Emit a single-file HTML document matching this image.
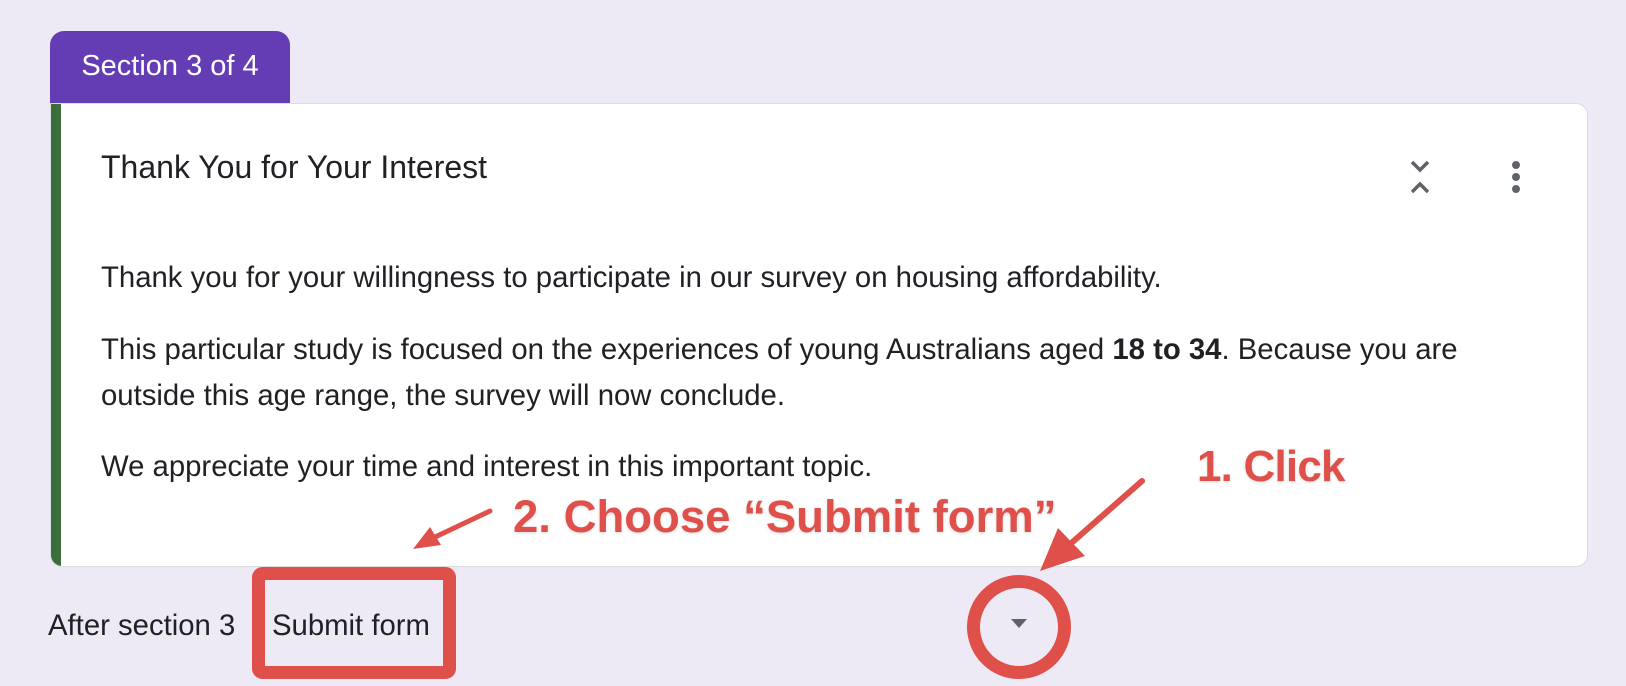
<!DOCTYPE html>
<html><head><meta charset="utf-8"><style>
html,body{margin:0;padding:0;}
body{width:1626px;height:686px;background:#edeaf5;position:relative;overflow:hidden;font-family:"Liberation Sans",Arial,sans-serif;color:#202124;}
.tab{position:absolute;left:50px;top:31px;width:240px;height:72px;background:#643db5;border-radius:14px 14px 0 0;color:#fff;font-size:29px;line-height:70px;text-align:center;}
.card{position:absolute;left:50px;top:103px;width:1538px;height:464px;background:#fff;border:1px solid #dadce0;border-radius:0 12px 12px 12px;box-sizing:border-box;overflow:hidden;}
.card .bar{position:absolute;left:0;top:0;bottom:0;width:10px;background:#3b6e3b;}
.t{position:absolute;left:50px;white-space:nowrap;font-size:29.3px;}
.red{color:#e0504a;font-weight:bold;position:absolute;white-space:nowrap;font-size:45.5px;text-shadow:0 1px 3px rgba(0,0,0,0.15);}
</style></head><body>
<div class="tab">Section 3 of 4</div>
<div class="card"><div class="bar"></div>
<div class="t" style="top:45px;font-size:32px;">Thank You for Your Interest</div>
<div class="t" style="top:157px;">Thank you for your willingness to participate in our survey on housing affordability.</div>
<div class="t" style="top:229px;">This particular study is focused on the experiences of young Australians aged <b>18 to 34</b>. Because you are</div>
<div class="t" style="top:275px;">outside this age range, the survey will now conclude.</div>
<div class="t" style="top:346px;">We appreciate your time and interest in this important topic.</div>
</div>
<svg style="position:absolute;left:0;top:0" width="1626" height="686">
<polyline points="1412,162 1420,170 1428,162" fill="none" stroke="#5f6368" stroke-width="3.5"/>
<polyline points="1412,192 1420,184 1428,192" fill="none" stroke="#5f6368" stroke-width="3.5"/>
<circle cx="1516" cy="165" r="4" fill="#5f6368"/><circle cx="1516" cy="177" r="4" fill="#5f6368"/><circle cx="1516" cy="189" r="4" fill="#5f6368"/>
<rect x="258.5" y="573.5" width="191" height="99" rx="4" fill="none" stroke="#e0504a" stroke-width="13"/>
<circle cx="1019" cy="627" r="45.5" fill="none" stroke="#e0504a" stroke-width="13"/>
<polygon points="1011,619 1027,619 1019,628" fill="#5f6368"/>
<line x1="490" y1="511" x2="433" y2="538" stroke="#e0504a" stroke-width="5" stroke-linecap="round"/>
<polygon points="413,549 430,527 441,545" fill="#e0504a"/>
<line x1="1142" y1="481" x2="1068" y2="546" stroke="#e0504a" stroke-width="6" stroke-linecap="round"/>
<polygon points="1040,571 1058,528 1085,556" fill="#e0504a"/>
</svg>
<div class="t" style="left:48px;top:609px;">After section 3</div>
<div class="t" style="left:272px;top:609px;">Submit form</div>
<div class="red" style="left:513px;top:491px;">2. Choose “Submit form”</div>
<div class="red" style="left:1197px;top:442px;font-size:44px;letter-spacing:-0.8px;">1. Click</div>
</body></html>
